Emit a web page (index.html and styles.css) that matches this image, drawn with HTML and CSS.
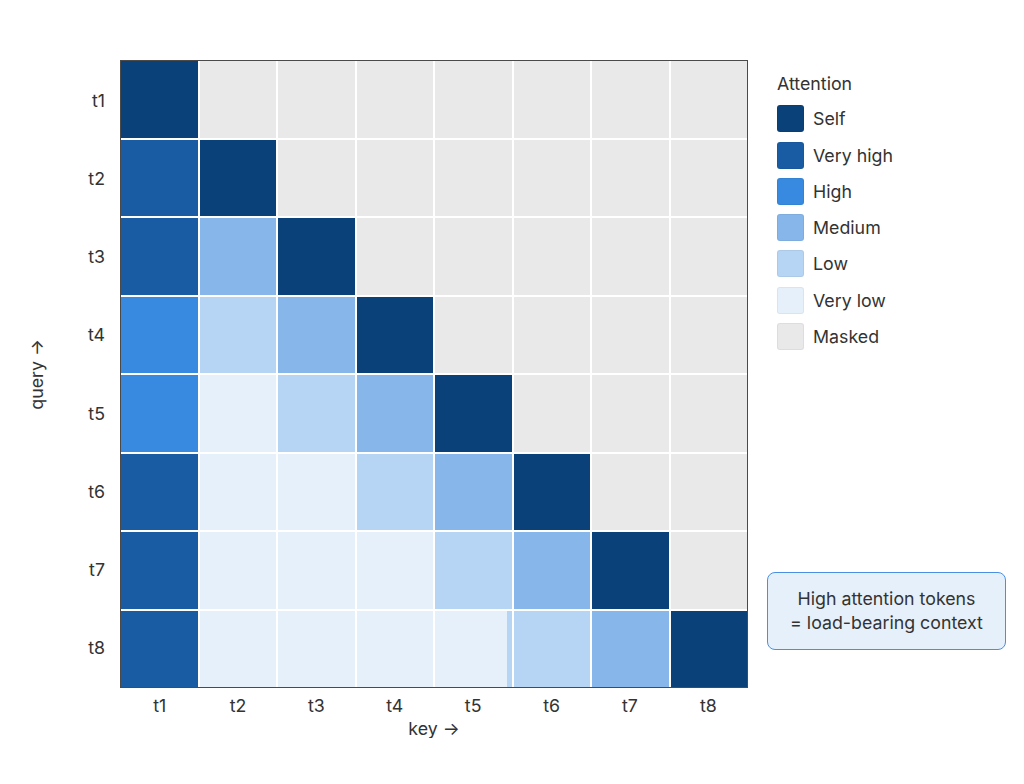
FILE: index.html
```html
<!DOCTYPE html>
<html lang="en">
<head>
<meta charset="utf-8">
<title>Attention matrix</title>
<link rel="stylesheet" href="styles.css">
</head>
<body>
<div class="page">
  <div class="chart">
    <div class="ylabel"><span>query →</span></div>
    <div class="rowlabels">
      <div>t1</div><div>t2</div><div>t3</div><div>t4</div><div>t5</div><div>t6</div><div>t7</div><div>t8</div>
    </div>
    <div class="matrix">
      <div class="c self"></div><div class="c masked"></div><div class="c masked"></div><div class="c masked"></div><div class="c masked"></div><div class="c masked"></div><div class="c masked"></div><div class="c masked"></div>
      <div class="c vhigh"></div><div class="c self"></div><div class="c masked"></div><div class="c masked"></div><div class="c masked"></div><div class="c masked"></div><div class="c masked"></div><div class="c masked"></div>
      <div class="c vhigh"></div><div class="c medium"></div><div class="c self"></div><div class="c masked"></div><div class="c masked"></div><div class="c masked"></div><div class="c masked"></div><div class="c masked"></div>
      <div class="c high"></div><div class="c low"></div><div class="c medium"></div><div class="c self"></div><div class="c masked"></div><div class="c masked"></div><div class="c masked"></div><div class="c masked"></div>
      <div class="c high"></div><div class="c vlow"></div><div class="c low"></div><div class="c medium"></div><div class="c self"></div><div class="c masked"></div><div class="c masked"></div><div class="c masked"></div>
      <div class="c vhigh"></div><div class="c vlow"></div><div class="c vlow"></div><div class="c low"></div><div class="c medium"></div><div class="c self"></div><div class="c masked"></div><div class="c masked"></div>
      <div class="c vhigh"></div><div class="c vlow"></div><div class="c vlow"></div><div class="c vlow"></div><div class="c low"></div><div class="c medium"></div><div class="c self"></div><div class="c masked"></div>
      <div class="c vhigh"></div><div class="c vlow"></div><div class="c vlow"></div><div class="c vlow"></div><div class="c vlow-edge"></div><div class="c low"></div><div class="c medium"></div><div class="c self"></div>
    </div>
    <div class="collabels">
      <div>t1</div><div>t2</div><div>t3</div><div>t4</div><div>t5</div><div>t6</div><div>t7</div><div>t8</div>
    </div>
    <div class="xlabel">key →</div>
  </div>
  <div class="side">
    <div class="legend">
      <div class="legend-title">Attention</div>
      <div class="legend-row"><span class="sw self"></span><span>Self</span></div>
      <div class="legend-row"><span class="sw vhigh"></span><span>Very high</span></div>
      <div class="legend-row"><span class="sw high"></span><span>High</span></div>
      <div class="legend-row"><span class="sw medium"></span><span>Medium</span></div>
      <div class="legend-row"><span class="sw low"></span><span>Low</span></div>
      <div class="legend-row"><span class="sw vlow"></span><span>Very low</span></div>
      <div class="legend-row"><span class="sw masked"></span><span>Masked</span></div>
    </div>
    <div class="callout">High attention tokens<br>= load-bearing context</div>
  </div>
</div>
</body>
</html>
```
FILE: styles.css
```css
html, body {
  margin: 0;
  padding: 0;
  background: #ffffff;
}
body {
  font-family: Inter, "Noto Sans", "Liberation Sans", sans-serif;
  font-size: 17.8px;
  color: #333333;
}
.page {
  display: flex;
  align-items: flex-start;
  padding: 60px 0 0 20px;
}
.chart {
  display: grid;
  grid-template-columns: 34px 66px 628px;
  grid-template-rows: 628px 34px 16px;
}
.ylabel {
  grid-column: 1;
  grid-row: 1;
  display: flex;
  align-items: center;
  justify-content: center;
}
.ylabel span {
  writing-mode: vertical-rl;
  transform: rotate(180deg);
  line-height: 20px;
}
.rowlabels {
  grid-column: 2;
  grid-row: 1;
  display: grid;
  grid-template-rows: repeat(8, 1fr);
  align-items: center;
  justify-items: end;
  padding: 1.5px 15px 1.5px 0;
  box-sizing: border-box;
}
.matrix {
  grid-column: 3;
  grid-row: 1;
  display: grid;
  grid-template-columns: repeat(8, 1fr);
  grid-template-rows: repeat(8, 1fr);
  gap: 2px;
  border: 1.5px solid #4a4a4a;
  background: #ffffff;
  box-sizing: border-box;
}
.collabels {
  grid-column: 3;
  grid-row: 2;
  display: grid;
  grid-template-columns: repeat(8, 1fr);
  align-items: center;
  justify-items: center;
  padding: 0 1.5px;
  gap: 2px;
}
.xlabel {
  grid-column: 3;
  grid-row: 3;
  text-align: center;
  line-height: 16px;
  margin-top: -1px;
}
.self { background: #0b4179; }
.vhigh { background: #1a5ca4; }
.high { background: #378ae0; }
.medium { background: #86b6ea; }
.low { background: #b6d4f4; }
.vlow { background: #e6f0fb; }
.masked { background: #e9e9e9; }
.vlow-edge {
  background: linear-gradient(to right, #e6f0fb 0, #e6f0fb calc(100% - 5px), #b6d4f4 calc(100% - 5px));
}
.side {
  margin-left: 19px;
  width: 239px;
  height: 628px;
  display: flex;
  flex-direction: column;
}
.legend {
  padding: 14px 0 0 10px;
  display: flex;
  flex-direction: column;
  gap: 9.25px;
}
.legend-title {
  line-height: 20px;
  margin-bottom: 2px;
}
.legend-row {
  display: flex;
  align-items: center;
  gap: 9px;
  height: 27px;
}
.sw {
  width: 27px;
  height: 27px;
  border-radius: 3px;
  box-sizing: border-box;
  border: 1px solid rgba(0, 0, 0, 0.05);
}
.callout {
  margin-top: auto;
  margin-bottom: 38px;
  height: 78px;
  box-sizing: border-box;
  border: 1px solid #4a90e2;
  border-radius: 8px;
  background: #e6f0fa;
  display: flex;
  align-items: center;
  justify-content: center;
  text-align: center;
  line-height: 24px;
}
```
